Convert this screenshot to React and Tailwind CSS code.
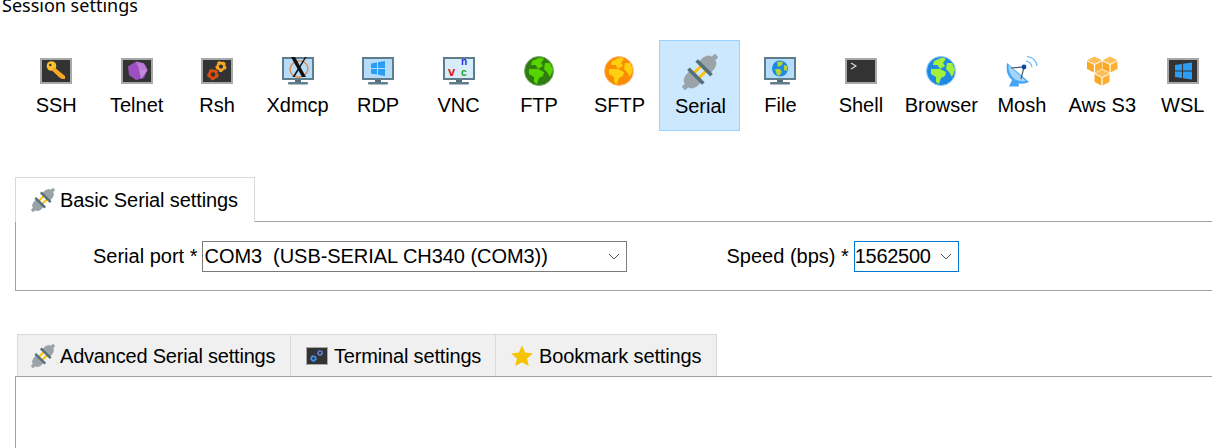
import React from "react";

/* ICONS */
function DarkBox({ children }) {
  return (
    <svg width="32" height="32" viewBox="0 0 32 32">
      <rect x="1" y="4" width="30" height="24" fill="#333333" stroke="#a8a8a8" strokeWidth="2" />
      {children}
    </svg>
  );
}

function Monitor({ children, screen = "#b5dcfb" }) {
  return (
    <svg width="32" height="32" viewBox="0 0 32 32">
      <rect x="1" y="3" width="30" height="21" fill={screen} stroke="#607d8b" strokeWidth="2" />
      <rect x="13" y="25" width="6" height="3" fill="#546e7a" />
      <rect x="6" y="27" width="20" height="2.5" rx="1" fill="#607d8b" />
      {children}
    </svg>
  );
}

function Gear({ cx, cy, r, color }) {
  return (
    <g>
      <circle cx={cx} cy={cy} r={r} fill="none" stroke={color} strokeWidth={r * 0.75} />
      <circle
        cx={cx}
        cy={cy}
        r={r * 1.35}
        fill="none"
        stroke={color}
        strokeWidth={r * 0.55}
        strokeDasharray={`${r * 0.85} ${r * 0.85}`}
      />
    </g>
  );
}

const LANDS = [
  "M9 6 L17 2.5 L21 4 L18 8 L20 11 L15 14 L12.5 10 L8 10 Z",
  "M6 14 L15 14 L21 17 L20 21 L16 23 L14 29 L11 27 L11 22 L6 19 Z",
  "M22 8 L27 8 L30 15 L27 22 L24 17 L21 14 Z",
];

function Globe({ sea, land, rim, size = 32 }) {
  return (
    <svg width={size} height={size} viewBox="0 0 32 32">
      <circle cx="16" cy="16" r="14.5" fill={sea} stroke={rim} strokeWidth="1" />
      {LANDS.map((d) => (
        <path key={d} d={d} fill={land} />
      ))}
    </svg>
  );
}

function Plug({ size }) {
  return (
    <svg width={size} height={size} viewBox="0 0 36 36">
      <g transform="translate(18 18) rotate(-45)">
        <rect x="-5" y="-5" width="10" height="3" fill="#ffc107" />
        <rect x="-5" y="2" width="10" height="3" fill="#ffc107" />
        <path d="M6 -8 H12 Q19 -6.5 19 -2.5 H23.5 V2.5 H19 Q19 6.5 12 8 H6 Z" fill="#9aa3a8" />
        <path d="M-6 -8 H-12 Q-19 -6.5 -19 -2.5 H-23.5 V2.5 H-19 Q-19 6.5 -12 8 H-6 Z" fill="#9aa3a8" />
        <rect x="4" y="-10.5" width="3.6" height="21" fill="#546e7a" />
        <rect x="-7.6" y="-10.5" width="3.6" height="21" fill="#546e7a" />
      </g>
    </svg>
  );
}

function Cube({ x, y }) {
  return (
    <g transform={`translate(${x} ${y})`}>
      <path d="M0 -7.5 L7.5 -3.7 L0 0 L-7.5 -3.7 Z" fill="#fbbf5c" />
      <path d="M-7.5 -2.7 L-0.6 0.8 V8.5 L-7.5 5 Z" fill="#f9a825" />
      <path d="M7.5 -2.7 L0.6 0.8 V8.5 L7.5 5 Z" fill="#fbb034" />
    </g>
  );
}

const icons = {
  ssh: (
    <DarkBox>
      <circle cx="11.5" cy="11" r="4.8" fill="#fbc02d" />
      <circle cx="10.3" cy="10" r="1.2" fill="#333333" />
      <path d="M14 12 L25 21 L25 24 L22 24 L19.5 22.5 L11.5 15 Z" fill="#f9a825" />
    </DarkBox>
  ),
  telnet: (
    <DarkBox>
      <path d="M15 6.5 L23 8.5 L26.5 15 L23 23 L15 25 L8 20 L7 11.5 Z" fill="#9c4fc0" />
      <path d="M15 6.5 L23 8.5 L26.5 15 L18 14 Z" fill="#ba7ad8" />
      <path d="M18 14 L26.5 15 L20 24 Z" fill="#c58ae0" />
    </DarkBox>
  ),
  rsh: (
    <DarkBox>
      <Gear cx="20" cy="11.5" r="3.4" color="#f9a825" />
      <Gear cx="12" cy="19.5" r="3.6" color="#d84f0c" />
    </DarkBox>
  ),
  xdmcp: (
    <Monitor>
      <ellipse cx="17" cy="14" rx="9" ry="8" fill="none" stroke="#e8873a" strokeWidth="1.4" transform="rotate(-15 17 14)" />
      <path d="M9 2 H13 L24 22 H20 Z" fill="#111111" />
      <path d="M23 2 H24.5 L12.5 22 H10.5 Z" fill="#111111" />
    </Monitor>
  ),
  rdp: (
    <Monitor>
      <path d="M9 8.5 L15 7.5 V13 H9 Z M16 7.3 L23 6 V13 H16 Z M9 14 H15 V19.5 L9 18.6 Z M16 14 H23 V21 L16 19.8 Z" fill="#2a9df4" />
    </Monitor>
  ),
  vnc: (
    <Monitor screen="#d9ecf9">
      <text x="5" y="21" fontFamily="Liberation Sans" fontWeight="700" fontSize="13" fill="#e01b1b">v</text>
      <text x="18" y="10" fontFamily="Liberation Sans" fontWeight="700" fontSize="10" fill="#1a2be0">n</text>
      <text x="18" y="21.3" fontFamily="Liberation Sans" fontWeight="700" fontSize="10" fill="#11a011">c</text>
    </Monitor>
  ),
  ftp: <Globe sea="#2f7d0e" land="#55d400" rim="#7aa86a" />,
  sftp: <Globe sea="#fb8c00" land="#ffcf10" rim="#fbc08a" />,
  serial: <Plug size={36} />,
  file: (
    <Monitor>
      <circle cx="16" cy="13.5" r="8" fill="#1e88e5" />
      <path d="M13 7 L19 6.5 L18 10 L14 12 Z M11 14 L16 14 L18 17 L15 21 L13 20 Z M20 10 L23 11 L23 16 L20 15 Z" fill="#b5d334" />
    </Monitor>
  ),
  shell: (
    <DarkBox>
      <path d="M6 8 L11 11 L6 14" fill="none" stroke="#e0e0e0" strokeWidth="1.1" />
    </DarkBox>
  ),
  browser: <Globe sea="#1e88e5" land="#a2f03c" rim="#90caf9" />,
  mosh: (
    <svg width="32" height="32" viewBox="0 0 32 32">
      <path d="M6 25 L3 31.5 H13 L12 26 Z" fill="#42a5f5" />
      <path d="M1 8 Q-1 20 7 26 Q15 31 23 27 Z" fill="#42a5f5" />
      <path d="M2.5 10 Q2 19 8.5 24 Q15 27.5 20 26 Z" fill="#a5d4fb" />
      <path d="M5 13 L18 12 L15 24" fill="none" stroke="#455a64" strokeWidth="1.2" />
      <circle cx="18" cy="12" r="2.4" fill="#0d47a1" />
      <path d="M20 6 Q25 7 26 12 M21 1.5 Q30 2.5 31 11" fill="none" stroke="#64b5f6" strokeWidth="1.2" />
    </svg>
  ),
  s3: (
    <svg width="32" height="32" viewBox="0 0 32 32">
      <Cube x="8.5" y="9" />
      <Cube x="24" y="9" />
      <Cube x="16" y="22" />
    </svg>
  ),
  wsl: (
    <DarkBox>
      <path d="M8 10 L15 9 V15.4 H8 Z M16 8.8 L25 7.5 V15.4 H16 Z M8 16.6 H15 V23 L8 22 Z M16 16.6 H25 V24.5 L16 23.2 Z" fill="#2a9df4" />
    </DarkBox>
  ),
};

const sessions = [
  { key: "ssh", label: "SSH" },
  { key: "telnet", label: "Telnet" },
  { key: "rsh", label: "Rsh" },
  { key: "xdmcp", label: "Xdmcp" },
  { key: "rdp", label: "RDP" },
  { key: "vnc", label: "VNC" },
  { key: "ftp", label: "FTP" },
  { key: "sftp", label: "SFTP" },
  { key: "serial", label: "Serial", active: true },
  { key: "file", label: "File" },
  { key: "shell", label: "Shell" },
  { key: "browser", label: "Browser" },
  { key: "mosh", label: "Mosh" },
  { key: "s3", label: "Aws S3" },
  { key: "wsl", label: "WSL" },
];

function Chevron() {
  return (
    <svg width="12" height="7" viewBox="0 0 12 7" className="shrink-0">
      <path d="M1 1 L6 6 L11 1" fill="none" stroke="#555555" strokeWidth="1" />
    </svg>
  );
}

function Select({ value, className, textClass }) {
  return (
    <div className={`flex h-[31px] items-center justify-between bg-white pr-[6px] ${className}`}>
      <span className={`-mt-px whitespace-pre ${textClass}`}>{value}</span>
      <Chevron />
    </div>
  );
}

export default function App() {
  return (
    <div className="h-[448px] w-[1212px] overflow-hidden bg-white font-['Liberation_Sans',sans-serif] text-[20px] leading-6 text-black">
      {/* TITLE */}
      <div className="h-10 pl-[2px] font-['Noto_Sans',sans-serif] text-[18px] leading-[10px]">
        Session settings
      </div>

      {/* SESSION TYPES */}
      <div className="ml-4 grid h-[91px] w-[1207px] grid-cols-15">
        {sessions.map((s) =>
          s.active ? (
            <div
              key={s.key}
              className="-ml-px flex flex-col items-center border border-[#99d1ff] bg-[#cce8ff] pl-[2px] pt-[13px]"
            >
              {icons[s.key]}
              <span className="mt-[4px]">{s.label}</span>
            </div>
          ) : (
            <div key={s.key} className="flex flex-col items-center pt-[15px]">
              {icons[s.key]}
              <span className="mt-[6px]">{s.label}</span>
            </div>
          )
        )}
      </div>

      {/* BASIC SETTINGS */}
      <div className="ml-[15px] mt-[46px]">
        <div className="relative z-10 -mb-px flex h-[45px] w-[240px] items-center gap-[5px] border border-b-0 border-[#d9d9d9] bg-white pl-[15px] tracking-[-0.1px]">
          <Plug size={24} />
          <span>Basic Serial settings</span>
        </div>
        <div className="flex h-[70px] items-start border border-r-0 border-[#a0a0a0] pl-[77px] pt-[19px]">
          <span className="mr-1 leading-[31px]">Serial port *</span>
          <Select
            value="COM3  (USB-SERIAL CH340 (COM3))"
            className="w-[425px] border border-[#7a7a7a] pl-[2px]"
            textClass="tracking-[-0.05px]"
          />
          <span className="ml-[100px] mr-[5px] leading-[31px]">Speed (bps) *</span>
          <Select
            value="1562500"
            className="w-[105px] border border-[#0078d7]"
            textClass="tracking-[-0.3px]"
          />
        </div>
      </div>

      {/* OTHER SETTINGS */}
      <div className="ml-[15px] mt-[43px]">
        <div className="ml-[2px] flex h-[42px] w-[700px] border border-b-0 border-[#d9d9d9] bg-[#f0f0f0]">
          <div className="flex w-[273px] items-center gap-[5px] border-r border-[#d9d9d9] pl-[13px]">
            <Plug size={24} />
            <span className="tracking-[-0.2px]">Advanced Serial settings</span>
          </div>
          <div className="flex w-[205px] items-center gap-[6px] border-r border-[#d9d9d9] pl-[15px]">
            <svg width="22" height="18" viewBox="0 0 22 18">
              <rect x="0.5" y="0.5" width="21" height="17" fill="#333333" stroke="#a8a8a8" />
              <Gear cx="14" cy="6" r="1.9" color="#5c7fd6" />
              <Gear cx="7.5" cy="11.5" r="2.1" color="#3f8de8" />
            </svg>
            <span className="tracking-[-0.17px]">Terminal settings</span>
          </div>
          <div className="flex flex-1 items-center gap-[6px] pl-[15px]">
            <svg width="22" height="22" viewBox="0 0 22 22">
              <path d="M11 0.5 L14.2 7.6 L21.8 8.4 L16.1 13.5 L17.7 21 L11 17.2 L4.3 21 L5.9 13.5 L0.2 8.4 L7.8 7.6 Z" fill="#f5c400" />
            </svg>
            <span className="tracking-[-0.12px]">Bookmark settings</span>
          </div>
        </div>
        <div className="h-[80px] border-l border-t border-[#a0a0a0]" />
      </div>
    </div>
  );
}
